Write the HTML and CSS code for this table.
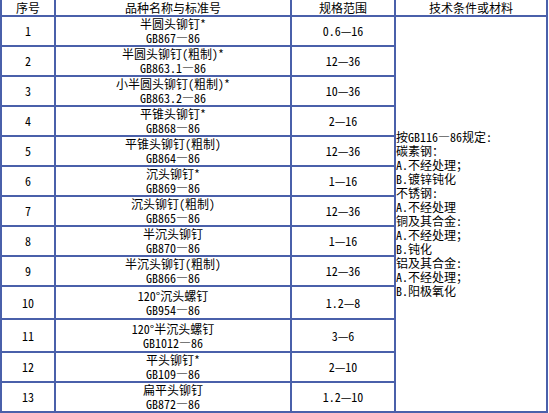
FILE: index.html
```html
<!DOCTYPE html>
<html lang="zh-CN">
<head>
<meta charset="utf-8">
<title>铆钉品种</title>
<link rel="stylesheet" href="styles.css">
</head>
<body>
<table class="spec">
  <tr class="head">
    <td class="c-no">序号</td>
    <td class="c-name">品种名称与标准号</td>
    <td class="c-range">规格范围</td>
    <td class="c-tech">技术条件或材料</td>
  </tr>
  <tr>
    <td class="c-no">1</td>
    <td class="c-name">半圆头铆钉*<br>GB867—86</td>
    <td class="c-range">0.6—16</td>
    <td class="c-tech body" rowspan="13">按GB116—86规定:<br>碳素钢：<br>A.不经处理；<br>B.镀锌钝化<br>不锈钢:<br>A.不经处理<br>铜及其合金:<br>A.不经处理；<br>B.钝化<br>铝及其合金:<br>A.不经处理；<br>B.阳极氧化</td>
  </tr>
  <tr>
    <td class="c-no">2</td>
    <td class="c-name">半圆头铆钉(粗制)*<br>GB863.1—86</td>
    <td class="c-range">12—36</td>
  </tr>
  <tr>
    <td class="c-no">3</td>
    <td class="c-name">小半圆头铆钉(粗制)*<br>GB863.2—86</td>
    <td class="c-range">10—36</td>
  </tr>
  <tr>
    <td class="c-no">4</td>
    <td class="c-name">平锥头铆钉*<br>GB868—86</td>
    <td class="c-range">2—16</td>
  </tr>
  <tr>
    <td class="c-no">5</td>
    <td class="c-name">平锥头铆钉(粗制)<br>GB864—86</td>
    <td class="c-range">12—36</td>
  </tr>
  <tr>
    <td class="c-no">6</td>
    <td class="c-name">沉头铆钉*<br>GB869—86</td>
    <td class="c-range">1—16</td>
  </tr>
  <tr>
    <td class="c-no">7</td>
    <td class="c-name">沉头铆钉(粗制)<br>GB865—86</td>
    <td class="c-range">12—36</td>
  </tr>
  <tr>
    <td class="c-no">8</td>
    <td class="c-name">半沉头铆钉<br>GB870—86</td>
    <td class="c-range">1—16</td>
  </tr>
  <tr>
    <td class="c-no">9</td>
    <td class="c-name">半沉头铆钉(粗制)<br>GB866—86</td>
    <td class="c-range">12—36</td>
  </tr>
  <tr class="tall">
    <td class="c-no">10</td>
    <td class="c-name">120°沉头螺钉<br>GB954—86</td>
    <td class="c-range">1.2—8</td>
  </tr>
  <tr class="tall">
    <td class="c-no">11</td>
    <td class="c-name">120°半沉头螺钉<br>GB1012—86</td>
    <td class="c-range">3—6</td>
  </tr>
  <tr>
    <td class="c-no">12</td>
    <td class="c-name">平头铆钉*<br>GB109—86</td>
    <td class="c-range">2—10</td>
  </tr>
  <tr>
    <td class="c-no">13</td>
    <td class="c-name">扁平头铆钉<br>GB872—86</td>
    <td class="c-range">1.2—10</td>
  </tr>
</table>
</body>
</html>
```
FILE: styles.css
```css
html, body {
  margin: 0;
  padding: 0;
  background: #ffffff;
}

.spec {
  border-collapse: separate;
  border-spacing: 0;
  table-layout: fixed;
  width: 548px;
  border-left: 2px solid #4a60aa;
  font-family: "Noto Sans Mono CJK SC", "Noto Sans CJK SC", sans-serif;
  font-size: 12px;
  line-height: 14px;
  color: #000000;
}

.spec td {
  padding: 0;
  border-right: 2px solid #4a60aa;
  border-bottom: 2px solid #4a60aa;
  text-align: center;
  vertical-align: middle;
  height: 28px;
  white-space: nowrap;
  box-sizing: content-box;
}

.spec .head td {
  height: 15px;
}

.spec .tall td {
  height: 31px;
}

.c-no { width: 52px; }
.c-name { width: 234px; }
.c-range { width: 102px; }
.c-tech { width: 150px; }

.spec td.body {
  text-align: left;
  height: auto;
}
```
